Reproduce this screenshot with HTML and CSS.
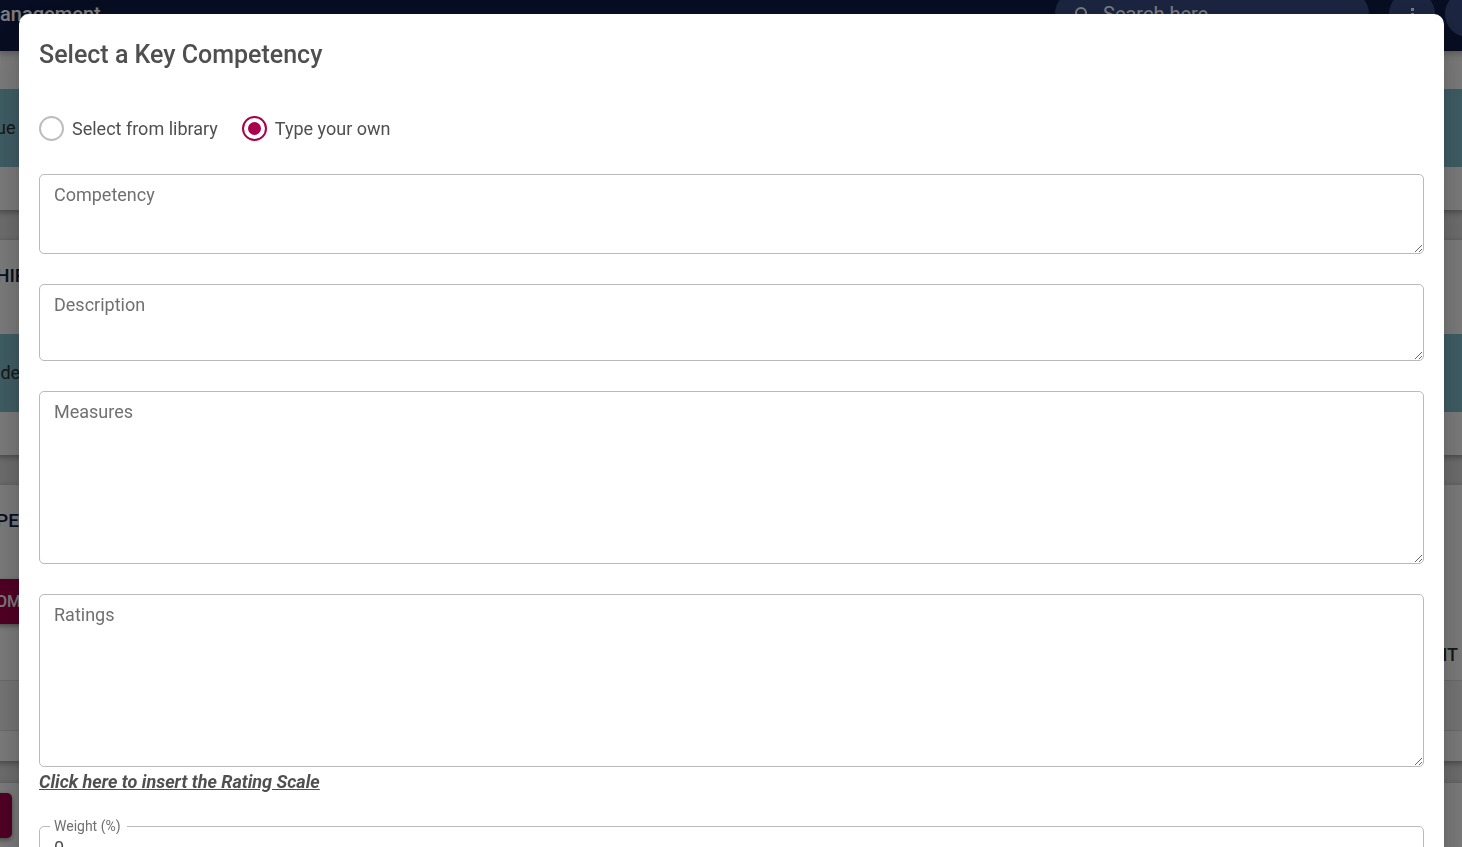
FILE: index.html
```html
<!DOCTYPE html>
<html lang="en">
<head>
    <meta charset="UTF-8">
    <meta name="viewport" content="width=device-width, initial-scale=1.0">
    <title>Select a Key Competency</title>
    <link rel="stylesheet" href="styles.css">
</head>
<body>
    <!-- Page behind the dialog -->
    <div class="page">
        <header class="topbar">
            <span class="topbar-title">anagement</span>
            <div class="search">
                <svg class="search-icon" viewBox="0 0 18 18" fill="none" stroke="currentColor" stroke-width="2">
                    <circle cx="8" cy="8" r="5"/>
                    <path d="M11.5 11.5l5 5"/>
                </svg>
                <input type="text" class="search-input" placeholder="Search here" aria-label="Search here">
            </div>
            <button class="round-btn" aria-label="Information">
                <svg width="20" height="20" viewBox="0 0 20 20" fill="currentColor">
                    <rect x="9" y="4" width="3" height="3"/>
                    <rect x="9" y="9" width="3" height="8"/>
                </svg>
            </button>
            <button class="round-btn" aria-label="Account"></button>
        </header>

        <main>
            <section class="card card-first">
                <div class="band">ue</div>
            </section>
            <section class="card">
                <h2 class="card-title">HIP</h2>
                <div class="band">ide</div>
            </section>
            <section class="card card-table">
                <h2 class="card-title">PE</h2>
                <button class="btn">OM</button>
                <div class="table-head">WEIGHT</div>
                <div class="table-row"></div>
            </section>
            <section class="card card-actions">
                <button class="btn btn-save" aria-label="Save"></button>
            </section>
        </main>
    </div>

    <!-- Dialog -->
    <div class="backdrop">
        <form class="modal" role="dialog" aria-labelledby="modal-title">
            <h1 class="modal-title" id="modal-title">Select a Key Competency</h1>

            <div class="radio-group">
                <label class="radio"><input type="radio" name="source" value="library">Select from library</label>
                <label class="radio"><input type="radio" name="source" value="own" checked>Type your own</label>
            </div>

            <div class="field">
                <label for="competency">Competency</label>
                <textarea id="competency" class="area-medium"></textarea>
            </div>
            <div class="field">
                <label for="description">Description</label>
                <textarea id="description" class="area-small"></textarea>
            </div>
            <div class="field">
                <label for="measures">Measures</label>
                <textarea id="measures" class="area-large"></textarea>
            </div>
            <div class="field field-ratings">
                <label for="ratings">Ratings</label>
                <textarea id="ratings" class="area-large"></textarea>
            </div>
            <a href="#" class="scale-link">Click here to insert the Rating Scale</a>

            <fieldset class="outlined">
                <legend><label for="weight">Weight (%)</label></legend>
                <input type="text" id="weight" value="0">
            </fieldset>
        </form>
    </div>
</body>
</html>
```
FILE: styles.css
```css
* {
    box-sizing: border-box;
    font-family: Roboto, "Liberation Sans", sans-serif;
}

body {
    margin: 0;
    height: 100vh;
    overflow: hidden;
    background: #e2e2e2;
    color: #4f4f4f;
    font-size: 18px;
}

h1, h2 {
    margin: 0;
    font-weight: 500;
}

button {
    border: none;
}

/* The page is scrolled a little under the dialog */
.page {
    margin: -23px -29px 0 -4px;
}

.topbar {
    position: relative;
    display: flex;
    align-items: center;
    height: 74px;
    padding: 0 0 0 4px;
    background: #101c46;
    color: white;
    box-shadow: 0 2px 8px rgba(0, 0, 0, 0.3);
}

.topbar-title {
    flex: 1;
    font-size: 20px;
    font-weight: 500;
}

.search {
    display: flex;
    align-items: center;
    gap: 12px;
    width: 314px;
    height: 46px;
    padding: 0 18px;
    border-radius: 23px;
    background: #384c84;
}

.search-icon {
    width: 18px;
    height: 18px;
}

.search-input {
    flex: 1;
    min-width: 0;
    padding: 0;
    border: none;
    background: none;
    color: white;
    font-size: 20px;
}

.search-input::placeholder {
    color: white;
}

.round-btn {
    display: grid;
    place-items: center;
    width: 46px;
    height: 46px;
    margin-left: 20px;
    padding: 0;
    border-radius: 50%;
    background: #384c84;
    color: white;
}

.round-btn + .round-btn {
    margin-left: 10px;
}

.card {
    height: 215px;
    margin-bottom: 30px;
    background: white;
    box-shadow: 0 2px 6px rgba(0, 0, 0, 0.35);
}

.card-first {
    height: 159px;
    padding-top: 38px;
}

.card-title {
    height: 94px;
    padding-top: 24px;
    color: #101c46;
    font-size: 19px;
    line-height: 24px;
}

.band {
    height: 78px;
    background: #84c0d0;
    color: #303030;
    line-height: 78px;
}

.card-table {
    height: 276px;
    margin-bottom: 22px;
}

.btn {
    display: block;
    height: 45px;
    padding: 0;
    width: 120px;
    background: #a8004c;
    color: white;
    font-size: 16px;
    font-weight: 500;
    text-align: left;
    box-shadow: 0 2px 5px rgba(0, 0, 0, 0.4);
}

.table-head {
    height: 56px;
    padding-right: 33px;
    color: #303030;
    font-weight: 500;
    line-height: 62px;
    text-align: right;
}

.table-row {
    height: 51px;
    border: 1px solid #dcdcdc;
    border-width: 1px 0;
    background: #f2f2f2;
}

.card-actions {
    height: 100px;
    padding-top: 10px;
}

.btn-save {
    width: 16px;
    border-radius: 0 5px 5px 0;
}

/* Dialog */
.backdrop {
    position: fixed;
    inset: 0;
    padding: 14px 18px 14px 19px;
    overflow: hidden;
    background: rgba(0, 0, 0, 0.5);
}

.modal {
    padding: 20px;
    border-radius: 10px;
    background: white;
    box-shadow: 0 11px 15px -7px rgba(0, 0, 0, 0.2),
        0 24px 38px 3px rgba(0, 0, 0, 0.14),
        0 9px 46px 8px rgba(0, 0, 0, 0.12);
}

.modal-title {
    font-size: 25px;
    line-height: 42px;
}

.radio-group {
    display: flex;
    gap: 24px;
    margin: 38px 0 32px;
}

.radio {
    display: flex;
    align-items: center;
    gap: 8px;
    height: 28px;
}

.radio input {
    appearance: none;
    display: grid;
    place-items: center;
    width: 25px;
    height: 25px;
    margin: 0;
    border: 2px solid #bdbdbd;
    border-radius: 50%;
}

.radio input:checked {
    border-color: #a8004c;
}

.radio input:checked::before {
    content: "";
    width: 13px;
    height: 13px;
    border-radius: 50%;
    background: #a8004c;
}

.field {
    position: relative;
    margin-bottom: 30px;
}

.field label {
    position: absolute;
    top: 10px;
    left: 15px;
    color: #707070;
    line-height: 22px;
}

.field textarea {
    display: block;
    width: 100%;
    padding: 10px 14px;
    border: 1px solid #bababa;
    border-radius: 5px;
    color: #4f4f4f;
    font-size: 18px;
    resize: vertical;
}

.area-small {
    height: 77px;
}

.area-medium {
    height: 80px;
}

.area-large {
    height: 173px;
}

.field-ratings {
    margin-bottom: 4px;
}

.scale-link {
    display: block;
    width: fit-content;
    color: #4f4f4f;
    font-style: italic;
    font-weight: bold;
    line-height: 22px;
}

.outlined {
    margin: 25px 0 0;
    padding: 0 10px;
    border: 1px solid #bababa;
    border-radius: 5px;
}

.outlined legend {
    padding: 0 6px 0 4px;
    color: #707070;
    font-size: 14px;
    line-height: 16px;
}

.outlined input {
    width: 100%;
    height: 26px;
    padding: 0 4px;
    border: none;
    outline: none;
    color: #4f4f4f;
    font-size: 18px;
}
```
